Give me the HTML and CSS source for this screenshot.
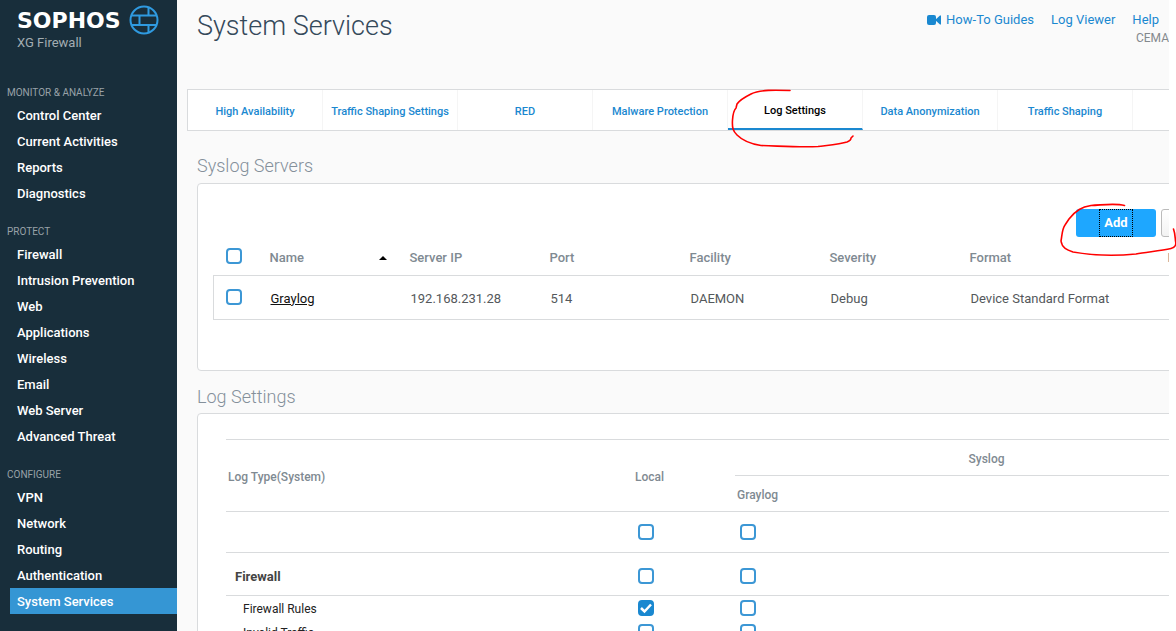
FILE: index.html
```html
<!DOCTYPE html>
<html lang="en">
<head>
<meta charset="utf-8">
<title>System Services</title>
<link rel="stylesheet" href="styles.css">
</head>
<body>
<aside class="sidebar">
  <div class="brand">
    <div class="brand-text">
      <span class="brand-name">SOPHOS</span>
      <span class="brand-product">XG Firewall</span>
    </div>
    <svg class="brand-icon" viewBox="0 0 30 30" fill="none" stroke="#2f9ae0" stroke-width="2">
      <circle cx="15" cy="15" r="13.500"/>
      <path d="M3 10.500H27M3 20H27M19.500 2V10.500M10.500 10.500V20M19.500 20V28"/>
    </svg>
  </div>
  <nav class="menu">
    <h2 class="menu-label">MONITOR &amp; ANALYZE</h2>
    <a class="menu-item" href="#">Control Center</a>
    <a class="menu-item" href="#">Current Activities</a>
    <a class="menu-item" href="#">Reports</a>
    <a class="menu-item" href="#">Diagnostics</a>
    <h2 class="menu-label">PROTECT</h2>
    <a class="menu-item" href="#">Firewall</a>
    <a class="menu-item" href="#">Intrusion Prevention</a>
    <a class="menu-item" href="#">Web</a>
    <a class="menu-item" href="#">Applications</a>
    <a class="menu-item" href="#">Wireless</a>
    <a class="menu-item" href="#">Email</a>
    <a class="menu-item" href="#">Web Server</a>
    <a class="menu-item" href="#">Advanced Threat</a>
    <h2 class="menu-label">CONFIGURE</h2>
    <a class="menu-item" href="#">VPN</a>
    <a class="menu-item" href="#">Network</a>
    <a class="menu-item" href="#">Routing</a>
    <a class="menu-item" href="#">Authentication</a>
    <a class="menu-item menu-item-active" href="#">System Services</a>
  </nav>
</aside>
<main class="main">
  <header class="header">
    <h1 class="title">System Services</h1>
    <div class="header-side">
      <div class="links">
        <a class="link" href="#"><svg class="video" viewBox="0 0 14 10" fill="#1a88d0"><rect width="9" height="10" rx="2"/><path d="M8 5L13 0.500H14V9.500H13Z"/></svg>How-To Guides</a>
        <a class="link" href="#">Log Viewer</a>
        <a class="link" href="#">Help</a>
      </div>
      <div class="account">CEMA</div>
    </div>
  </header>
  <nav class="tabs">
    <a class="tab" href="#">High Availability</a>
    <a class="tab" href="#">Traffic Shaping Settings</a>
    <a class="tab" href="#">RED</a>
    <a class="tab" href="#">Malware Protection</a>
    <a class="tab tab-active" href="#">Log Settings</a>
    <a class="tab" href="#">Data Anonymization</a>
    <a class="tab" href="#">Traffic Shaping</a>
  </nav>
  <h2 class="section-title">Syslog Servers</h2>
  <section class="panel servers">
    <div class="toolbar">
      <button class="btn btn-primary" type="button"><span class="btn-focus">Add</span></button>
      <button class="btn btn-plain" type="button" aria-label="Delete"></button>
    </div>
    <table class="server-table">
      <colgroup><col class="c-check"><col class="c-std"><col class="c-std"><col class="c-std"><col class="c-std"><col class="c-std"><col class="c-format"><col></colgroup>
      <thead>
        <tr>
          <th><input class="check" type="checkbox" aria-label="Select all servers"></th>
          <th><span class="sort">Name<svg class="caret" viewBox="0 0 8 4"><path d="M0 4L4 0L8 4Z"/></svg></span></th>
          <th>Server IP</th><th>Port</th><th>Facility</th><th>Severity</th><th>Format</th><th>Manage</th>
        </tr>
      </thead>
      <tbody>
        <tr>
          <td><input class="check" type="checkbox" aria-label="Select Graylog"></td>
          <td><a class="server-link" href="#">Graylog</a></td>
          <td>192.168.231.28</td><td>514</td><td>DAEMON</td><td>Debug</td><td>Device Standard Format</td><td></td>
        </tr>
      </tbody>
    </table>
  </section>
  <h2 class="section-title">Log Settings</h2>
  <section class="panel logs">
    <table class="log-table">
      <colgroup><col class="l-type"><col class="l-local"><col></colgroup>
      <thead>
        <tr><th rowspan="2">Log Type(System)</th><th rowspan="2">Local</th><th class="center">Syslog</th></tr>
        <tr><th>Graylog</th></tr>
      </thead>
      <tbody>
        <tr class="row-all"><td></td><td><input class="check" type="checkbox" aria-label="All local"></td><td><input class="check" type="checkbox" aria-label="All Graylog"></td></tr>
        <tr class="row-group"><td>Firewall</td><td><input class="check" type="checkbox" aria-label="Firewall local"></td><td><input class="check" type="checkbox" aria-label="Firewall Graylog"></td></tr>
        <tr class="row-item"><td>Firewall Rules</td><td><input class="check" type="checkbox" checked aria-label="Firewall Rules local"></td><td><input class="check" type="checkbox" aria-label="Firewall Rules Graylog"></td></tr>
        <tr class="row-item"><td>Invalid Traffic</td><td><input class="check" type="checkbox" aria-label="Invalid Traffic local"></td><td><input class="check" type="checkbox" aria-label="Invalid Traffic Graylog"></td></tr>
      </tbody>
    </table>
  </section>
</main>
<svg class="marks" width="1176" height="270" viewBox="0 0 1176 270" fill="none" stroke="#f00" stroke-width="1.600" stroke-linecap="round" stroke-linejoin="round">
  <path d="M790 90.500C775 90 760 89.500 751 94C745 97 739 101 737 104L736 108C734 110 733 113 732.500 120C732 128 733 131 737 135C743 141 751 144 761 145.500C780 146 800 147.500 818 146.500C830 145 841 144 847 142Q851 140.500 851 138L853 136"/>
  <path d="M1124.500 205.500C1115 203 1103 205 1091 205.500C1082 207 1076 210 1069 219L1065 225C1062 229 1062 236 1061 241C1062 248 1067 250 1073 252C1090 255 1115 256 1136 254C1146 252 1160 251 1171 248.500Q1177 247 1175.500 241C1175 236 1175 233 1173.500 229"/>
</svg>
</body>
</html>
```
FILE: styles.css
```css
* { box-sizing: border-box; }

body {
  position: relative;
  display: flex;
  height: 100vh;
  margin: 0;
  overflow: hidden;
  background: #fff;
  color: #54585b;
  font: 13px/20px Roboto, "Liberation Sans", sans-serif;
}

a { color: inherit; text-decoration: none; }
h1, h2 { margin: 0; }

.sidebar {
  flex: 0 0 177px;
  background: #182e3b;
  color: #fff;
}

.brand {
  display: flex;
  gap: 8px;
  height: 67px;
  padding: 5px 0 0 17px;
}
.brand-text { display: flex; flex-direction: column; padding-top: 1px; }
.brand-name { font: bold 22px/30px "DejaVu Sans", sans-serif; }
.brand-product { color: #a3adb2; line-height: 14px; }
.brand-icon { width: 30px; height: 30px; }

.menu-label {
  margin-top: 15px;
  padding: 2px 0 0 7px;
  color: #98a2a8;
  font-size: 10px;
  font-weight: 400;
  line-height: 18px;
}
.menu-item {
  display: block;
  height: 26px;
  margin-left: 10px;
  padding-left: 7px;
  font-weight: 500;
  line-height: 28px;
}
.menu-item-active { background: #3596d4; }

.main {
  flex: 1;
  min-width: 0;
  margin-right: 7px;
  overflow: hidden;
  background: #fafafa;
}

.header {
  display: flex;
  justify-content: space-between;
  height: 89px;
  padding: 10px 0 0 20px;
}
.title {
  color: #35495a;
  font-size: 27px;
  font-weight: 300;
  line-height: 32px;
}
.header-side { text-align: right; }
.links { display: flex; gap: 17px; padding-right: 10px; color: #1a88d0; }
.link { display: flex; align-items: center; gap: 5px; }
.video { width: 14px; height: 10px; }
.account { color: #84898d; font-size: 12px; line-height: 16px; }

.tabs {
  display: flex;
  height: 42px;
  margin-left: 10px;
  border: 1px solid #d9dbdd;
  border-right: 0;
  background: #fff;
}
.tab {
  flex: 0 0 135px;
  border-right: 1px solid #f5f5f5;
  color: #1a88d0;
  font-size: 11px;
  font-weight: 500;
  line-height: 44px;
  text-align: center;
}
.tab-active {
  border-bottom: 2px solid #1a88d0;
  color: #000;
  line-height: 42px;
}

.section-title {
  padding: 24px 0 6px 20px;
  color: #84909a;
  font-size: 18px;
  font-weight: 300;
  line-height: 22px;
}

.panel {
  margin: 0 -90px 0 20px;
  border: 1px solid #d9dbdd;
  border-radius: 4px;
  background: #fff;
}
.servers { height: 188px; padding: 25px 17px 0 15px; }
.logs { padding: 25px 22px 25px 28px; }
.servers + .section-title { padding-top: 15px; padding-bottom: 5px; }

.toolbar { display: flex; justify-content: flex-end; gap: 5px; }
.btn {
  display: flex;
  justify-content: center;
  width: 80px;
  height: 28px;
  padding: 0;
  border: 0;
  border-radius: 3px;
  font: bold 13px/26px Roboto, sans-serif;
}
.btn-primary { background: #1ea7ff; color: #fff; }
.btn-focus { padding: 0 4px; border: 1px dotted #000; }
.btn-plain { border: 1px solid #bbb; background: linear-gradient(#fff, #f3f3f3); }

table {
  width: 100%;
  border-collapse: collapse;
  table-layout: fixed;
}
th, td { padding: 0; text-align: left; }
th { color: #7f8a92; font-weight: 500; }

.c-check { width: 56px; }
.c-std { width: 140px; }
.c-format { width: 198px; }
.server-table th { height: 38px; padding-top: 4px; }
.server-table td { height: 44px; padding: 3px 0 0 1px; }
.server-table th:first-child, .server-table td:first-child { padding: 0 0 0 12px; }
.server-table tbody tr { border: 1px solid #d9dbdd; }
.sort { display: flex; align-items: center; justify-content: space-between; padding-right: 23px; }
.caret { width: 8px; height: 4px; }
.server-link { color: #111; text-decoration: underline; }

.l-type { width: 407px; }
.l-local { width: 102px; }
.log-table tr { border-bottom: 1px solid #d9dbdd; }
.log-table thead { border-top: 1px solid #d9dbdd; }
.log-table th { height: 36px; padding: 2px 0 0 2px; border-bottom: 1px solid #d9dbdd; font-size: 12px; }
.log-table th.center { text-align: center; }
.log-table td + td { padding-left: 5px; }
.log-table .row-all { height: 41px; }
.log-table .row-group { height: 43px; }
.log-table .row-group td:first-child { padding: 6px 0 0 9px; color: #444; font-weight: 700; }
.log-table .row-group td + td { padding-top: 4px; }
.log-table .row-item { height: 24px; border: 0; color: #222; font-size: 12px; }
.log-table .row-item td:first-child { padding: 2px 0 0 17px; }

.check {
  display: block;
  width: 16px;
  height: 16px;
  margin: 0;
  appearance: none;
  border: 2px solid #3c97d5;
  border-radius: 4px;
  background: #fff;
}
.check:checked {
  border-color: #1a88d0;
  background: #1a88d0 url("data:image/svg+xml,%3Csvg xmlns='http://www.w3.org/2000/svg' viewBox='0 0 12 12' fill='none' stroke='white' stroke-width='2.5'%3E%3Cpath d='M1 6L4.500 9.500L11 2.500'/%3E%3C/svg%3E") center / 12px no-repeat;
}

.marks {
  position: absolute;
  top: 0;
  left: 0;
  pointer-events: none;
}
```
